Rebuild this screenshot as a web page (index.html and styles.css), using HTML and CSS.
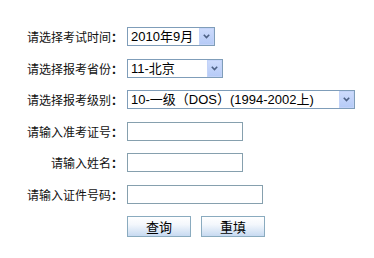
FILE: index.html
```html
<!DOCTYPE html>
<html lang="zh-CN">
<head>
    <meta charset="UTF-8">
    <title>成绩查询</title>
    <link rel="stylesheet" href="styles.css">
</head>
<body>
    <form class="query-form" onsubmit="return false;">
        <label class="label" for="exam-time">请选择考试时间<span class="colon">：</span></label>
        <div class="field">
            <span class="select-box w-time">
                <select id="exam-time"><option>2010年9月</option></select>
                <span class="arrow"><svg width="7" height="5" viewBox="0 0 7 5"><polyline points="0.8,0.8 3.5,3.6 6.2,0.8" fill="none" stroke="#4d6185" stroke-width="1.6"/></svg></span>
            </span>
        </div>

        <label class="label" for="province">请选择报考省份<span class="colon">：</span></label>
        <div class="field">
            <span class="select-box w-prov">
                <select id="province"><option>11-北京</option></select>
                <span class="arrow"><svg width="7" height="5" viewBox="0 0 7 5"><polyline points="0.8,0.8 3.5,3.6 6.2,0.8" fill="none" stroke="#4d6185" stroke-width="1.6"/></svg></span>
            </span>
        </div>

        <label class="label" for="level">请选择报考级别<span class="colon">：</span></label>
        <div class="field">
            <span class="select-box w-level">
                <select id="level"><option>10-一级（DOS）(1994-2002上)</option></select>
                <span class="arrow"><svg width="7" height="5" viewBox="0 0 7 5"><polyline points="0.8,0.8 3.5,3.6 6.2,0.8" fill="none" stroke="#4d6185" stroke-width="1.6"/></svg></span>
            </span>
        </div>

        <label class="label" for="ticket">请输入准考证号<span class="colon">：</span></label>
        <div class="field"><input type="text" id="ticket" class="text w-short"></div>

        <label class="label" for="name">请输入姓名<span class="colon">：</span></label>
        <div class="field"><input type="text" id="name" class="text w-short"></div>

        <label class="label" for="idcard">请输入证件号码<span class="colon">：</span></label>
        <div class="field"><input type="text" id="idcard" class="text w-long"></div>

        <div class="buttons">
            <button type="submit" class="btn">查询</button>
            <button type="reset" class="btn">重填</button>
        </div>
    </form>
</body>
</html>
```

FILE: styles.css
```css
body { margin: 0; background-color: #fff; color: #111; font-family: "Noto Sans CJK SC", sans-serif; font-size: 12px; }
.query-form { display: grid; grid-template-columns: 96px auto; column-gap: 4px; row-gap: 12.5px; align-items: center; padding: 27px 0 0 27px; }
.label { text-align: right; line-height: 19px; white-space: nowrap; }
.colon { font-family: "Noto Sans CJK JP", sans-serif; font-weight: bold; }
.field { display: flex; }

.select-box { position: relative; display: block; height: 19px; }
.select-box select { -webkit-appearance: none; appearance: none; width: 100%; height: 19px; margin: 0; padding: 0 0 0 3px; border: 1px solid #7f9db9; border-radius: 0; background-color: #fff; color: #000; font-family: "Liberation Sans", "Noto Sans CJK SC", sans-serif; font-size: 13px; line-height: 17px; box-sizing: border-box; outline: none; }
.select-box .arrow { position: absolute; top: 1px; right: 1px; bottom: 1px; width: 15px; display: flex; align-items: center; justify-content: center; background: linear-gradient(#cddbfc, #b6cbf7); border: 1px solid #c3d3f8; box-sizing: border-box; pointer-events: none; }
.w-time { width: 88px; }
.w-prov { width: 96px; }
.w-level { width: 228px; }

.text { height: 19px; margin: 0; padding: 0 2px; border: 1px solid #86a0ae; box-sizing: border-box; font-size: 12px; outline: none; }
.w-short { width: 116px; }
.w-long { width: 136px; }

.buttons { grid-column: 2; display: flex; gap: 10px; }
.btn { width: 64px; height: 21px; margin: 0; padding: 0; border: 1px solid #8aabbf; background: linear-gradient(#ffffff 0%, #f3f7fc 40%, #c7daf1 100%); color: #000; font-family: "Noto Sans CJK SC", sans-serif; font-size: 13px; line-height: 19px; cursor: pointer; }
```
